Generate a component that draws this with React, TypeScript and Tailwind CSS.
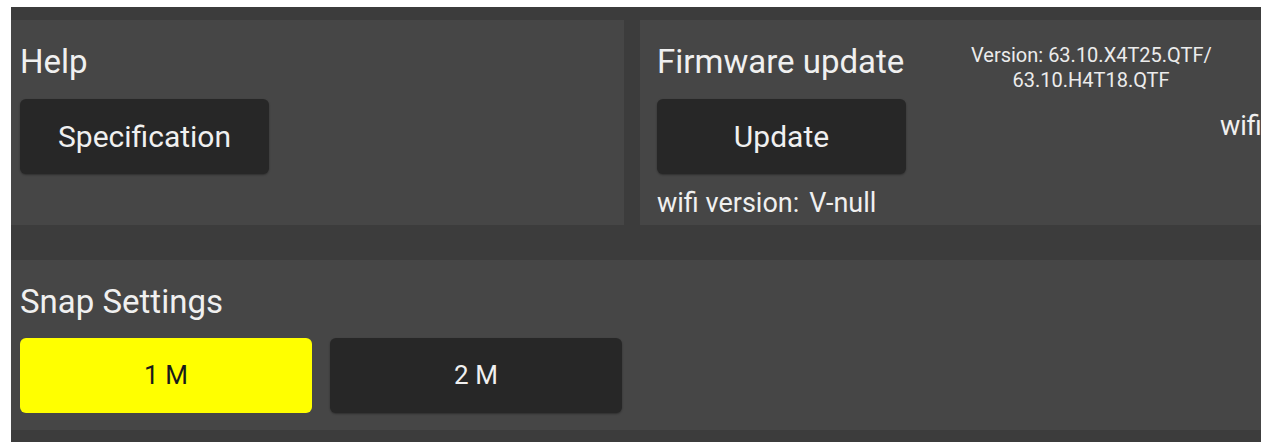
import React from "react";

const font = { fontFamily: "Roboto, 'Noto Sans', sans-serif" };

function DarkButton({ label, className = "" }: { label: string; className?: string }) {
  return (
    <button
      className={`flex h-[75px] items-center justify-center rounded-[6px] bg-[#272727] text-[#f0f0f0] shadow-[0_1px_2px_rgba(0,0,0,0.35)] ${className}`}
    >
      {label}
    </button>
  );
}

export default function App() {
  return (
    <div className="h-[448px] w-full bg-white pt-[7px] pr-[12px] pb-[6px] pl-[11px]" style={font}>
      <div className="flex h-full flex-col overflow-hidden bg-[#3c3c3c] pt-[13px]">
        {/* Top row: Help + Firmware */}
        <div className="flex h-[205px] gap-[16px]">
          {/* Help */}
          <div className="flex w-[613px] shrink-0 flex-col bg-[#464646] pt-[24px] pl-[9px]">
            <div className="text-[33px] leading-[35px] text-[#f0f0f0]">Help</div>
            <DarkButton label="Specification" className="mt-[20px] w-[249px] text-[30px]" />
          </div>

          {/* Firmware update */}
          <div className="flex flex-1 overflow-hidden bg-[#464646] pl-[17px]">
            <div className="flex w-[249px] shrink-0 flex-col pt-[24px]">
              <div className="text-[33px] leading-[35px] whitespace-nowrap text-[#f0f0f0]">Firmware update</div>
              <DarkButton label="Update" className="mt-[20px] w-[249px] text-[30px]" />
              <div className="mt-[15px] flex text-[27px] leading-[28px] whitespace-nowrap text-[#f0f0f0]">
                <span>wifi version:</span>
                <span className="ml-[10px]">V-null</span>
              </div>
            </div>
            <div className="ml-[65px] w-[240px] shrink-0 pt-[23px] text-center text-[20px] leading-[25px] text-[#ececec]">
              <div className="whitespace-nowrap">Version: 63.10.X4T25.QTF/</div>
              <div className="whitespace-nowrap">63.10.H4T18.QTF</div>
            </div>
            <div className="ml-[9px] shrink-0 pt-[92px] text-[27px] leading-[28px] whitespace-nowrap text-[#f0f0f0]">
              wifi version:
            </div>
          </div>
        </div>

        {/* Snap Settings */}
        <div className="mt-[35px] flex h-[170px] flex-col bg-[#464646] pt-[24px] pl-[9px]">
          <div className="text-[33px] leading-[35px] text-[#f0f0f0]">Snap Settings</div>
          <div className="mt-[19px] flex gap-[18px]">
            <button className="flex h-[75px] w-[292px] items-center justify-center rounded-[6px] bg-[#ffff00] text-[26px] text-[#1a1a1a]">
              1 M
            </button>
            <DarkButton label="2 M" className="w-[292px] text-[26px]" />
          </div>
        </div>
      </div>
    </div>
  );
}
